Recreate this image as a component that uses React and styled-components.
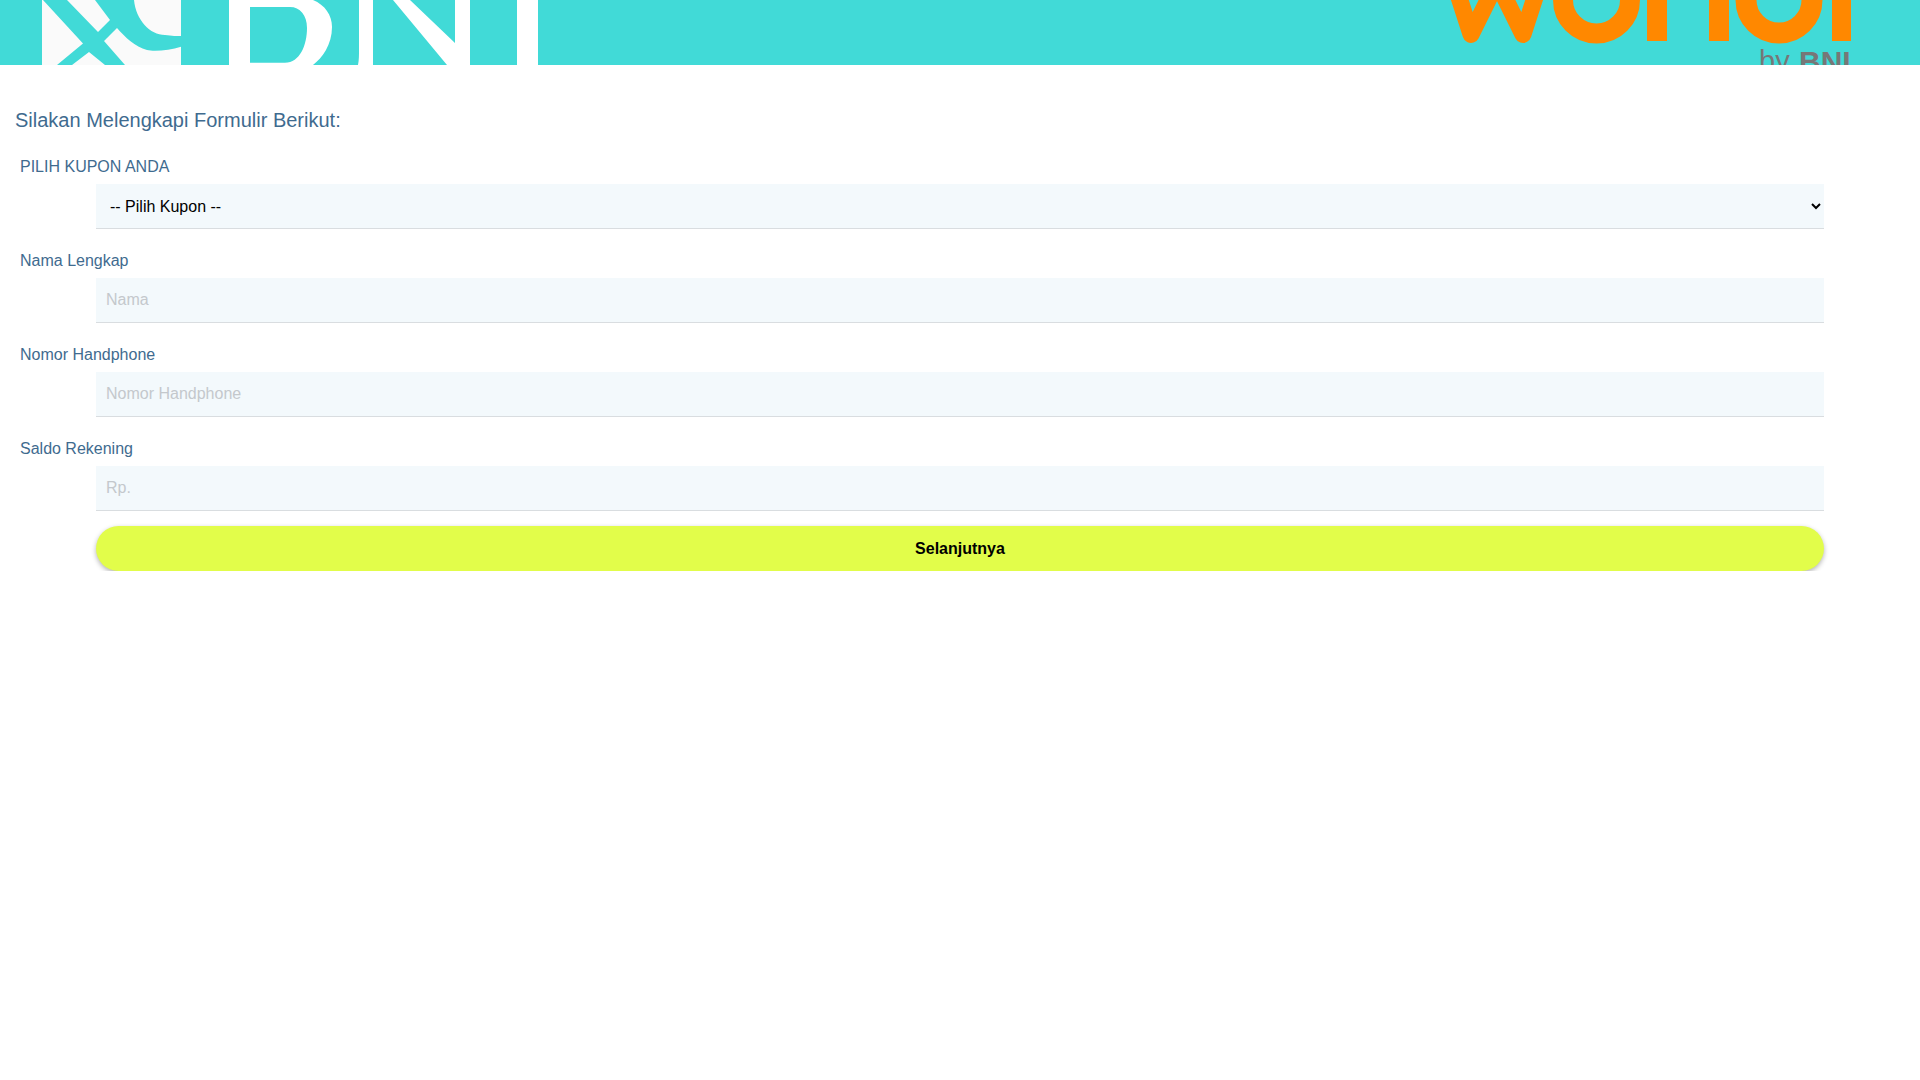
import React from 'react'
import styled, { createGlobalStyle } from 'styled-components'

const GlobalStyle = createGlobalStyle`
  html, body {
    margin: 0;
    background: #fff;
    font-family: "Liberation Sans", Arial, sans-serif;
  }
`

const fields = [
  { label: 'Nama Lengkap', placeholder: 'Nama' },
  { label: 'Nomor Handphone', placeholder: 'Nomor Handphone' },
  { label: 'Saldo Rekening', placeholder: 'Rp.' }
]

const BankLogo = () =>
  <svg width="560" height="65" viewBox="0 0 560 65">
    <rect x="42" y="0" width="139" height="65" fill="#fafafa" />
    <path
      fill="#41dad7"
      d="M43 0H67L98 32L110 20L95 0H134C136 20 150 35 165 35C172 36 177 36 181 36V46.7C170 50 155 52 147 50C135 47 125 37 117 28L104 41L125 65H105L89 52L72 65H57L83 43.5Z"
    />
    <path
      fill="#fff"
      fillRule="evenodd"
      d="M229 0H313C325 5 332 15 332 27C332 45 322 58 313 65H229ZM250 7V62.7H285C300 62.7 307 45 307 28C307 15 300 7 290 7Z"
    />
    <path fill="#fff" d="M359 0H373V65H358C359 60 359 55 359 50Z" />
    <path fill="#fff" d="M393 0H410L455 43V0H470V65H447Z" />
    <rect x="517" y="0" width="21" height="65" fill="#fff" />
  </svg>

const PartnerLogo = () =>
  <svg width="520" height="65" viewBox="1400 0 520 65">
    <g fill="none" stroke="#ff8800">
      <path
        strokeWidth="17"
        strokeLinejoin="round"
        strokeLinecap="round"
        d="M1456 -12L1471 34.5L1497 -18L1523 34.5L1538 -12"
      />
      <circle cx="1596.5" cy="0" r="33.5" strokeWidth="20" />
      <circle cx="1779" cy="0" r="33" strokeWidth="21" />
    </g>
    <g fill="#ff8800">
      <rect x="1647" y="-5" width="20" height="46" />
      <rect x="1709" y="-5" width="20" height="46" />
      <rect x="1832" y="-5" width="19" height="46" />
    </g>
    <g fill="#777" fontFamily="Liberation Sans, Arial, sans-serif">
      <text x="1759" y="71" fontSize="29">by</text>
      <text x="1799" y="72" fontSize="30" fontWeight="700">BNI</text>
    </g>
  </svg>

export default function App() {
  return (
    <>
      <GlobalStyle />
      <Banner>
        <BankLogo />
        <PartnerLogo />
      </Banner>
      <Main>
        <Heading>Silakan Melengkapi Formulir Berikut:</Heading>
        <Field>
          <Label>PILIH KUPON ANDA</Label>
          <Select defaultValue="">
            <option value="">-- Pilih Kupon --</option>
          </Select>
        </Field>
        {fields.map(field =>
          <Field key={field.label}>
            <Label>{field.label}</Label>
            <Input type="text" placeholder={field.placeholder} />
          </Field>
        )}
        <Button type="button">Selanjutnya</Button>
      </Main>
    </>
  )
}

const Banner = styled.header`
  display: flex;
  justify-content: space-between;
  height: 65px;
  overflow: hidden;
  background: #41dad7;

  svg {
    display: block;
    flex: none;
  }
`

const Main = styled.main`
  padding: 43px 0 0;
`

const Heading = styled.h2`
  margin: 0 0 25px 15px;
  font-size: 20px;
  font-weight: 400;
  line-height: 24px;
  color: #3f6b8f;
`

const Field = styled.div`
  display: flex;
  flex-direction: column;
  margin-bottom: 22px;

  &:last-of-type {
    margin-bottom: 15px;
  }
`

const Label = styled.label`
  margin: 0 0 7px 20px;
  font-size: 16px;
  line-height: 20px;
  color: #3f6b8f;
`

const Control = `
  box-sizing: border-box;
  display: block;
  width: 1728px;
  height: 45px;
  margin-left: 96px;
  border: 0;
  border-bottom: 1px solid #d9dde0;
  border-radius: 0;
  outline: none;
  background-color: #f3f9fc;
  font-family: "Liberation Sans", Arial, sans-serif;
  font-size: 16px;
`

const Select = styled.select`
  ${Control}
  padding: 0 6px 0 10px;
  color: #000;
`

const Input = styled.input`
  ${Control}
  padding: 0 10px;
  color: #333;

  &::placeholder {
    color: #c4c8cc;
    opacity: 1;
  }
`

const Button = styled.button`
  display: block;
  width: 1728px;
  height: 45px;
  margin-left: 96px;
  border: 0;
  border-radius: 23px;
  background: #e2fd4a;
  box-shadow: 0 2px 5px rgba(0, 0, 0, .3);
  font-family: "Liberation Sans", Arial, sans-serif;
  font-size: 16px;
  font-weight: 700;
  color: #000;
`
